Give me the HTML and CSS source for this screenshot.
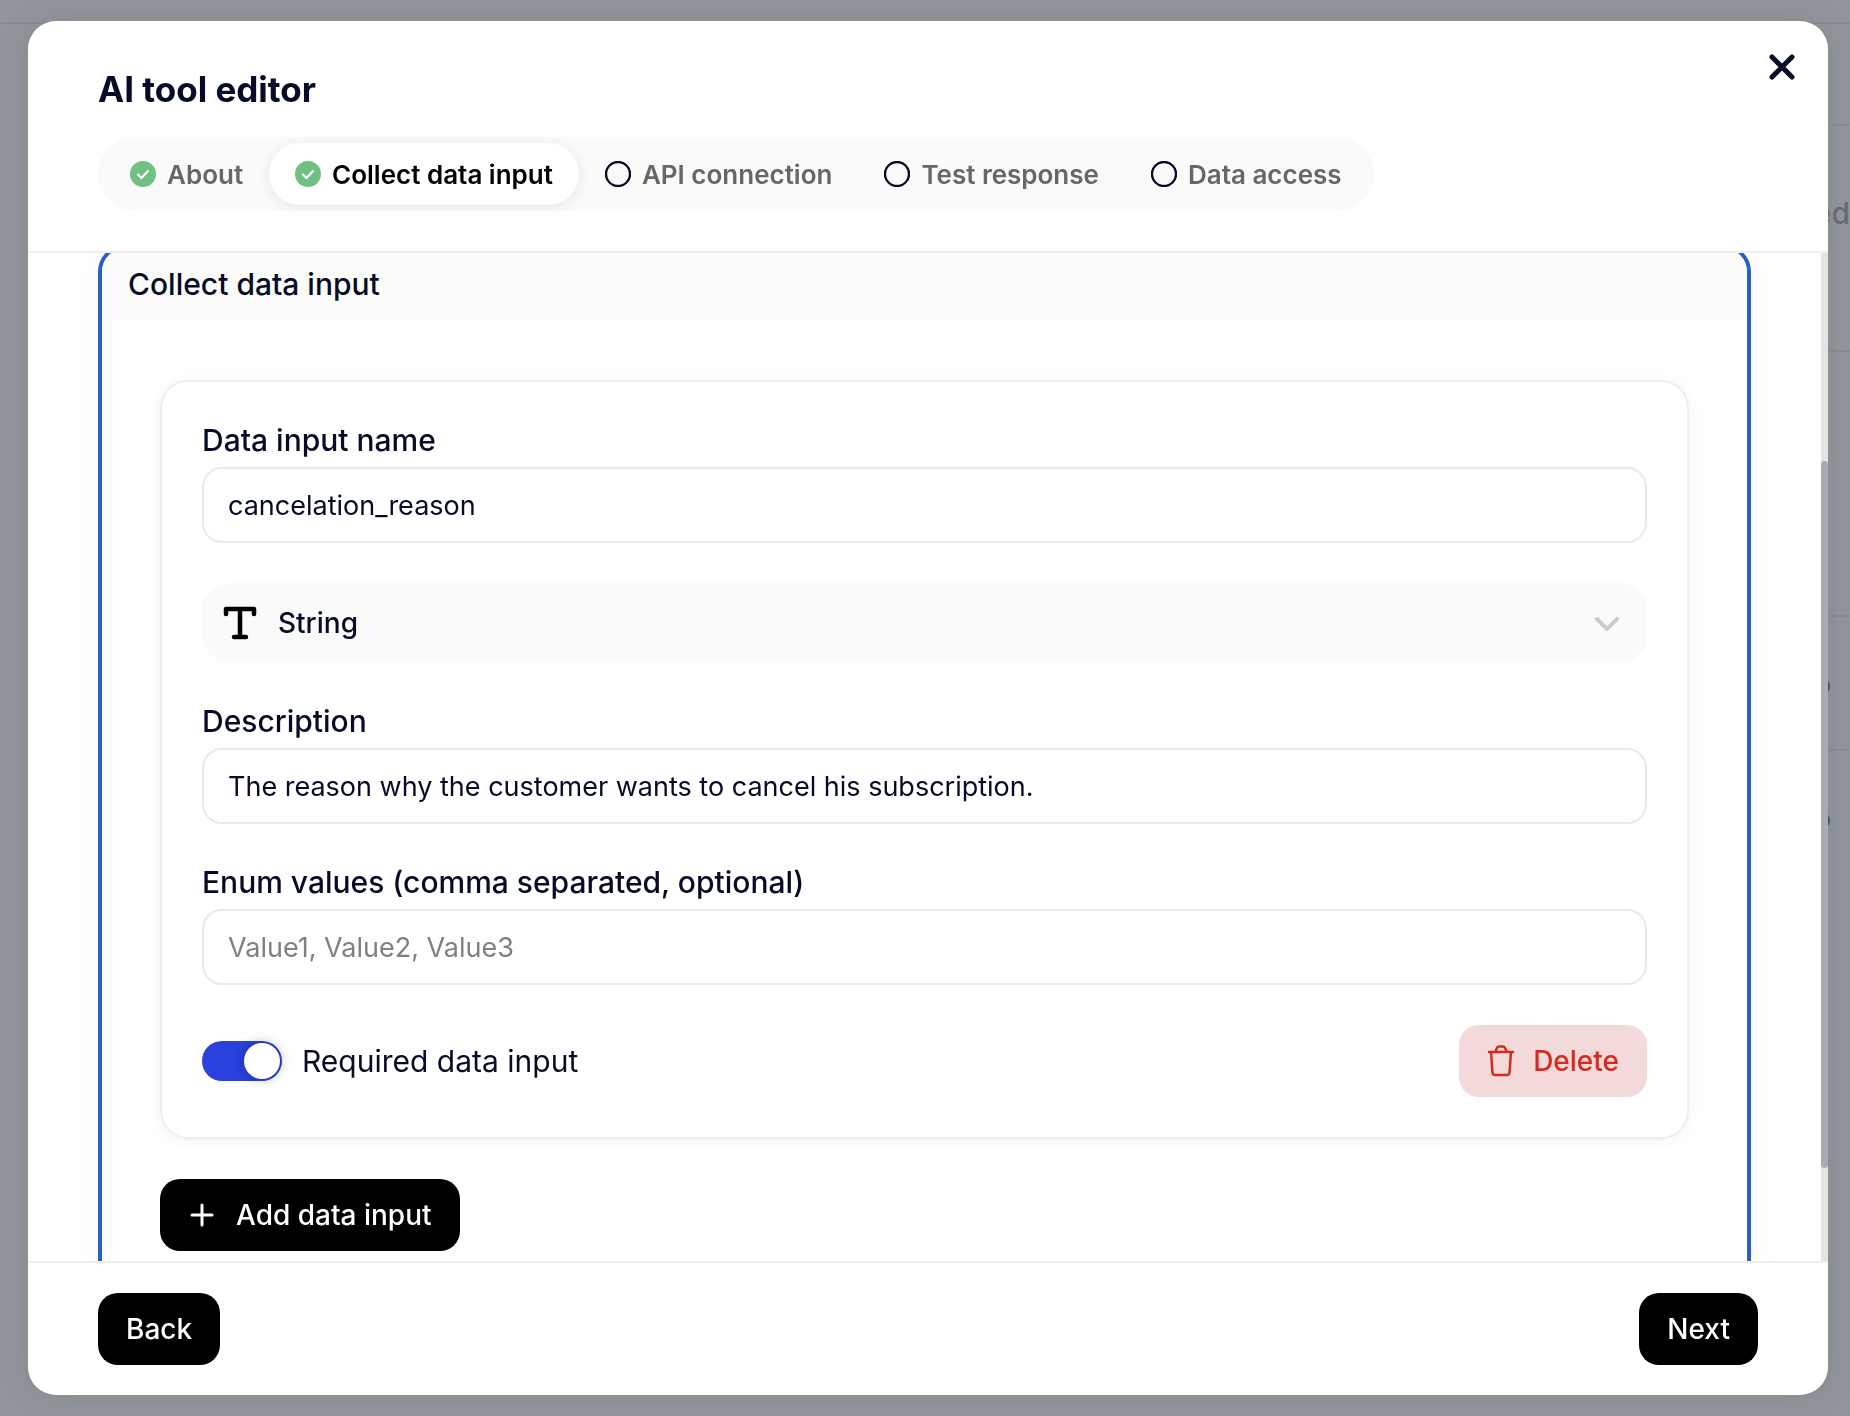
FILE: index.html
```html
<!DOCTYPE html>
<html lang="en">
<head>
    <meta charset="UTF-8">
    <title>AI tool editor</title>
    <link rel="stylesheet" href="styles.css">
    <script>
        document.addEventListener('DOMContentLoaded', () => {
            const modalBody = document.querySelector('.modal-body');
            const thumb = document.querySelector('.scroll-thumb');

            // keep the thin scroll thumb in step with the content
            function updateThumb() {
                thumb.style.height = modalBody.clientHeight / modalBody.scrollHeight * 100 + '%';
                thumb.style.top = modalBody.scrollTop / modalBody.scrollHeight * 100 + '%';
            }

            modalBody.addEventListener('scroll', updateThumb);
            modalBody.scrollTop = 297;
            updateThumb();
        });
    </script>
</head>
<body>
    <div class="page">
        <div class="page-row page-top"></div>
        <div class="page-main">
            <div class="page-row page-bar"></div>
            <div class="page-row page-head"><span>ed</span></div>
            <div class="page-row page-tools"></div>
            <div class="page-row page-item"><span>o</span></div>
            <div class="page-item"><span>o</span></div>
        </div>
    </div>

    <div class="overlay">
        <div class="modal" role="dialog" aria-labelledby="modalTitle">
            <header class="modal-header">
                <h1 id="modalTitle">AI tool editor</h1>
                <button class="close" aria-label="Close">
                    <svg width="28" height="28" viewBox="0 0 28 28" fill="none" stroke="currentColor" stroke-width="5" stroke-linecap="round">
                        <path d="M4 4l20 20M24 4L4 24"/>
                    </svg>
                </button>
                <nav class="steps">
                    <button class="step">
                        <svg class="step-icon" viewBox="0 0 26 26"><circle cx="13" cy="13" r="13" fill="#71c083"/><path d="M8 13.5l3.500 3.500 6.500-7" fill="none" stroke="#fff" stroke-width="2.200" stroke-linecap="round" stroke-linejoin="round"/></svg>
                        About
                    </button>
                    <button class="step active">
                        <svg class="step-icon" viewBox="0 0 26 26"><circle cx="13" cy="13" r="13" fill="#71c083"/><path d="M8 13.5l3.500 3.500 6.500-7" fill="none" stroke="#fff" stroke-width="2.200" stroke-linecap="round" stroke-linejoin="round"/></svg>
                        Collect data input
                    </button>
                    <button class="step">
                        <svg class="step-icon" viewBox="0 0 26 26"><circle cx="13" cy="13" r="12" fill="none" stroke="#060b26" stroke-width="2.400"/></svg>
                        API connection
                    </button>
                    <button class="step">
                        <svg class="step-icon" viewBox="0 0 26 26"><circle cx="13" cy="13" r="12" fill="none" stroke="#060b26" stroke-width="2.400"/></svg>
                        Test response
                    </button>
                    <button class="step">
                        <svg class="step-icon" viewBox="0 0 26 26"><circle cx="13" cy="13" r="12" fill="none" stroke="#060b26" stroke-width="2.400"/></svg>
                        Data access
                    </button>
                </nav>
            </header>

            <div class="modal-main">
                <div class="modal-body">
                    <section class="panel">
                        <h2>Collect data input</h2>
                        <div class="panel-content">
                            <div class="card">
                                <div class="form-group">
                                    <label for="inputName">Data input name</label>
                                    <input type="text" id="inputName" value="cancelation_reason">
                                </div>
                                <div class="select-box">
                                    <svg class="type-icon" width="32" height="32" viewBox="0 0 32 32" fill="none" stroke="#000" stroke-width="4.500" stroke-linecap="round" stroke-linejoin="round">
                                        <path d="M2 7V2h28v5M16 2v28M10 30h12"/>
                                    </svg>
                                    <select aria-label="Data type">
                                        <option>String</option>
                                    </select>
                                    <svg class="arrow-icon" width="24" height="14" viewBox="0 0 24 14" fill="none" stroke="#ccc" stroke-width="4" stroke-linecap="round" stroke-linejoin="round">
                                        <path d="M2 2l10 10L22 2"/>
                                    </svg>
                                </div>
                                <div class="form-group">
                                    <label for="description">Description</label>
                                    <input type="text" id="description" value="The reason why the customer wants to cancel his subscription.">
                                </div>
                                <div class="form-group">
                                    <label for="enumValues">Enum values (comma separated, optional)</label>
                                    <input type="text" id="enumValues" placeholder="Value1, Value2, Value3">
                                </div>
                                <div class="card-footer">
                                    <label class="toggle">
                                        <input type="checkbox" checked>
                                        Required data input
                                    </label>
                                    <button class="button delete">
                                        <svg width="28" height="32" viewBox="0 0 28 32" fill="none" stroke="currentColor" stroke-width="2.500" stroke-linecap="round" stroke-linejoin="round">
                                            <path d="M2 7h24M4 7l1.500 20.500q.2 2.500 2.500 2.500h12q2.300 0 2.500-2.500L24 7M8 7l2-4q.6-1.400 2-1.400h4q1.400 0 2 1.400l2 4"/>
                                        </svg>
                                        Delete
                                    </button>
                                </div>
                            </div>
                            <button class="button add">
                                <svg width="28" height="28" viewBox="0 0 28 28" fill="none" stroke="currentColor" stroke-width="3" stroke-linecap="round">
                                    <path d="M14 4v20M4 14h20"/>
                                </svg>
                                Add data input
                            </button>
                        </div>
                    </section>
                </div>
                <div class="scroll-track">
                    <div class="scroll-thumb"></div>
                </div>
            </div>

            <footer class="modal-footer">
                <button class="button">Back</button>
                <button class="button">Next</button>
            </footer>
        </div>
    </div>
</body>
</html>
```
FILE: styles.css
```css
* {
    box-sizing: border-box;
}

body {
    margin: 0;
    height: 100vh;
    overflow: hidden;
    font-family: Inter, "Liberation Sans", sans-serif;
    font-size: 27px;
    color: #060b26;
    background-color: #91959d;
}

button, input, select {
    font: inherit;
    color: inherit;
}

h1, h2 {
    margin: 0;
}

/* page behind the dialog */
.page-main {
    margin-left: 50%;
}

.page-row {
    border-bottom: 2px solid #888d8f;
}

.page-top {
    height: 24px;
}

.page-bar {
    height: 102px;
}

.page-head {
    height: 226px;
    padding-top: 67px;
    line-height: 40px;
    text-align: right;
    font-size: 30px;
    font-weight: 500;
    color: #666a73;
}

.page-tools {
    height: 265px;
}

.page-item {
    height: 134px;
    padding: 48px 19px 0 0;
    line-height: 40px;
    text-align: right;
    font-weight: 600;
    color: #3c4150;
}

.overlay {
    position: fixed;
    inset: 0;
    padding: 21px 22px 21px 28px;
}

.modal {
    position: relative;
    display: flex;
    flex-direction: column;
    height: 100%;
    overflow: hidden;
    background-color: #fff;
    border-radius: 28px;
    box-shadow: 0 0 24px rgba(120, 130, 120, 0.5);
}

.modal-header {
    padding: 46px 70px 40px;
    border-bottom: 2px solid #eeefeb;
}

.modal-header h1 {
    margin-bottom: 26px;
    font-size: 35px;
    line-height: 44px;
    font-weight: 700;
}

.close {
    position: absolute;
    top: 32px;
    right: 32px;
    display: flex;
    padding: 0;
    border: none;
    background: none;
    cursor: pointer;
}

.steps {
    display: inline-flex;
    padding: 6px;
    border-radius: 37px;
    background-color: #fafaf8;
    vertical-align: top;
}

.step {
    display: flex;
    align-items: center;
    gap: 11px;
    height: 62px;
    padding: 0 26px;
    border: none;
    border-radius: 31px;
    background: none;
    color: #66666c;
    font-size: 26px;
    font-weight: 600;
    cursor: pointer;
}

.step.active {
    background-color: #fff;
    color: #000;
    box-shadow: 0 2px 14px rgba(0, 0, 0, 0.08);
}

.step-icon {
    width: 26px;
    height: 26px;
}

.modal-main {
    display: flex;
    flex: 1;
    min-height: 0;
}

.modal-body {
    flex: 1;
    padding: 288px 70px 70px;
    overflow-y: auto;
    scrollbar-width: none;
}

.scroll-track {
    position: relative;
    width: 7px;
    background-color: #e1e3e5;
}

.scroll-thumb {
    position: absolute;
    width: 100%;
    border-radius: 4px;
    background-color: #a7abb4;
}

.panel {
    min-height: 1079px;
    overflow: hidden;
    border: 4px solid #2860c5;
    border-radius: 28px;
    box-shadow: 0 0 24px rgba(0, 0, 0, 0.04);
}

.panel h2 {
    padding: 0 26px;
    font-size: 30px;
    line-height: 72px;
    font-weight: 500;
    background-color: #fbfbf9;
}

.panel-content {
    display: flex;
    flex-direction: column;
    align-items: flex-start;
    gap: 40px;
    padding: 60px 58px;
}

.card {
    display: flex;
    flex-direction: column;
    gap: 40px;
    width: 100%;
    padding: 40px;
    border: 2px solid #eeefeb;
    border-radius: 28px;
    box-shadow: 0 2px 16px rgba(0, 0, 0, 0.05);
}

.form-group label {
    display: block;
    margin-bottom: 8px;
    font-size: 30px;
    line-height: 37px;
    font-weight: 500;
}

.form-group input {
    display: block;
    width: 100%;
    height: 76px;
    padding: 0 24px;
    border: 2px solid #eaebe5;
    border-radius: 20px;
    background-color: #fff;
    outline: none;
}

.form-group input::placeholder {
    color: #808080;
}

.select-box {
    position: relative;
}

.select-box select {
    display: block;
    width: 100%;
    height: 80px;
    padding: 0 76px;
    border: none;
    border-radius: 28px;
    appearance: none;
    background-color: #fafaf8;
    font-size: 28px;
    font-weight: 500;
}

.type-icon {
    position: absolute;
    top: 24px;
    left: 22px;
    overflow: visible;
}

.arrow-icon {
    position: absolute;
    top: 34px;
    right: 28px;
}

.card-footer {
    display: flex;
    justify-content: space-between;
    align-items: center;
}

.toggle {
    display: flex;
    align-items: center;
    gap: 20px;
    font-size: 30px;
}

.toggle input {
    width: 80px;
    height: 40px;
    margin: 0;
    padding: 2px;
    appearance: none;
    border-radius: 20px;
    background-color: #2a41dd;
}

.toggle input::before {
    content: "";
    display: block;
    width: 36px;
    height: 36px;
    border-radius: 50%;
    background-color: #fff;
    box-shadow: 0 0 12px rgba(0, 0, 0, 0.3);
}

.toggle input:checked::before {
    margin-left: auto;
}

.button {
    display: flex;
    align-items: center;
    gap: 20px;
    height: 72px;
    padding: 0 28px;
    border: none;
    border-radius: 20px;
    background-color: #000;
    color: #fff;
    font-size: 28px;
    font-weight: 500;
    cursor: pointer;
}

.delete {
    gap: 18px;
    background-color: #f4d9db;
    color: #d52b1e;
}

.modal-footer {
    display: flex;
    justify-content: space-between;
    padding: 30px 70px;
    border-top: 2px solid #eeefeb;
}
```
